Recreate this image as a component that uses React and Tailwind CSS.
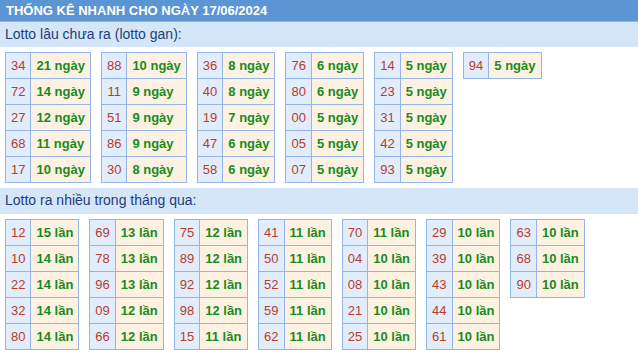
import React from "react";

const gan = [
  [["34", "21"], ["72", "14"], ["27", "12"], ["68", "11"], ["17", "10"]],
  [["88", "10"], ["11", "9"], ["51", "9"], ["86", "9"], ["30", "8"]],
  [["36", "8"], ["40", "8"], ["19", "7"], ["47", "6"], ["58", "6"]],
  [["76", "6"], ["80", "6"], ["00", "5"], ["05", "5"], ["07", "5"]],
  [["14", "5"], ["23", "5"], ["31", "5"], ["42", "5"], ["93", "5"]],
  [["94", "5"]],
];

const nhieu = [
  [["12", "15"], ["10", "14"], ["22", "14"], ["32", "14"], ["80", "14"]],
  [["69", "13"], ["78", "13"], ["96", "13"], ["09", "12"], ["66", "12"]],
  [["75", "12"], ["89", "12"], ["92", "12"], ["98", "12"], ["15", "11"]],
  [["41", "11"], ["50", "11"], ["52", "11"], ["59", "11"], ["62", "11"]],
  [["70", "11"], ["04", "10"], ["08", "10"], ["21", "10"], ["25", "10"]],
  [["29", "10"], ["39", "10"], ["43", "10"], ["44", "10"], ["61", "10"]],
  [["63", "10"], ["68", "10"], ["90", "10"]],
];

function Box({ rows, unit }) {
  return (
    <table className="border-collapse border border-[#95b5e6] text-[13px] leading-[15px]">
      <tbody>
        {rows.map(([n, c], i) => (
          <tr key={i}>
            <td className="border border-[#95b5e6] bg-[#e2edfc] px-[5px] py-[5px] text-[#b83c2a] text-center">
              {n}
            </td>
            <td className="border border-[#95b5e6] bg-[#fdf2e2] px-[5px] py-[5px] font-bold text-[#1a8a22]">
              {c} {unit}
            </td>
          </tr>
        ))}
      </tbody>
    </table>
  );
}

function Sub({ children, h }) {
  return (
    <div className={`${h} bg-[#d5e6f9] pl-[5px] text-[14px] leading-[25px] text-[#1e3d7a]`}>
      {children}
    </div>
  );
}

export default function App() {
  return (
    <div
      className="w-[638px] h-[354px] bg-white overflow-hidden"
      style={{ fontFamily: '"Liberation Sans", Arial, sans-serif' }}
    >
      <div className="h-[22px] bg-[#5b95d3] pl-[6px] text-[13px] font-bold leading-[22px] text-white border-b border-[#8fb6e3]">
        THỐNG KÊ NHANH CHO NGÀY 17/06/2024
      </div>
      <Sub h="h-[25px]">Lotto lâu chưa ra (lotto gan):</Sub>
      <div className="flex items-start gap-[10px] pl-[5px] pt-[5px] pb-[5px]">
        {gan.map((t, i) => (
          <Box key={i} rows={t} unit="ngày" />
        ))}
      </div>
      <Sub h="h-[26px]">Lotto ra nhiều trong tháng qua:</Sub>
      <div className="flex items-start gap-[10px] pl-[5px] pt-[5px]">
        {nhieu.map((t, i) => (
          <Box key={i} rows={t} unit="lần" />
        ))}
      </div>
    </div>
  );
}
